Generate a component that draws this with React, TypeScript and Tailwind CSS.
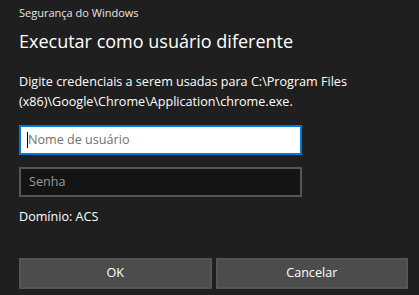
import React from "react";

export default function App() {
  return (
    <div
      className="w-[419px] h-[295px] bg-[#1f1f1f] text-white overflow-hidden flex flex-col pl-[19px]"
      style={{ fontFamily: '"Open Sans", "Noto Sans", sans-serif' }}
    >
      <div className="pt-[6px] text-[11px] leading-[14px] text-[#e6e6e6]">Segurança do Windows</div>
      <div className="mt-[9px] text-[18px] leading-[24px] text-white">Executar como usuário diferente</div>
      <div className="mt-[19px] text-[12.6px] leading-[20px] text-white w-[380px]">
        Digite credenciais a serem usadas para C:\Program Files (x86)\Google\Chrome\Application\chrome.exe.
      </div>
      <div className="mt-[13px] w-[283px] h-[30px] bg-white border-2 border-[#0078d7] flex items-center px-[6px]">
        <div className="w-px h-[16px] bg-black" />
        <span className="text-[12.6px] text-[#707070]">Nome de usuário</span>
      </div>
      <div className="mt-[12px] w-[283px] h-[30px] bg-[#141414] border-2 border-[#555555] flex items-center px-[8px]">
        <span className="text-[12.6px] text-[#9a9a9a]">Senha</span>
      </div>
      <div className="mt-[10px] text-[12.6px] leading-[19px] text-white">Domínio: ACS</div>
      <div className="mt-auto mb-[6px] flex gap-[4px] w-[389px]">
        <button className="flex-1 h-[31px] bg-[#4c4c4c] border-2 border-[#555555] text-[12.6px] text-white">OK</button>
        <button className="flex-1 h-[31px] bg-[#4c4c4c] border-2 border-[#555555] text-[12.6px] text-white">Cancelar</button>
      </div>
    </div>
  );
}
